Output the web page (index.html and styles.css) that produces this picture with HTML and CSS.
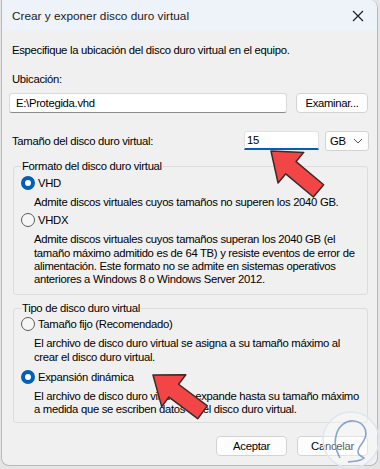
FILE: index.html
```html
<!DOCTYPE html>
<html lang="es">
<head>
  <meta charset="UTF-8">
  <title>Crear y exponer disco duro virtual</title>
  <link rel="stylesheet" href="styles.css">
</head>
<body>
  <div class="dialog">
    <div class="titlebar">
      <span class="title">Crear y exponer disco duro virtual</span>
      <svg class="close" width="12" height="12" viewBox="0 0 12 12"><path d="M1 1L11 11M11 1L1 11" stroke="#1a1a1a" stroke-width="1.1" fill="none"/></svg>
    </div>

    <div class="content">
      <p class="intro">Especifique la ubicación del disco duro virtual en el equipo.</p>
      <label class="lbl" for="loc">Ubicación:</label>
      <div class="row loc-row">
        <input class="textbox loc" id="loc" type="text" value="E:\Protegida.vhd" readonly>
        <button class="btn browse">Examinar...</button>
      </div>

      <div class="row size-row">
        <span>Tamaño del disco duro virtual:</span>
        <input class="textbox size" type="text" value="15" readonly>
        <div class="select">
          <span>GB</span>
          <svg width="10" height="6" viewBox="0 0 10 6"><path d="M1 1L5 5L9 1" stroke="#555" stroke-width="1" fill="none"/></svg>
        </div>
      </div>

      <fieldset class="group format">
        <legend>Formato del disco duro virtual</legend>
        <div class="radio checked"><span class="dot"></span>VHD</div>
        <p class="desc">Admite discos virtuales cuyos tamaños no superen los 2040 GB.</p>
        <div class="radio"><span class="dot"></span>VHDX</div>
        <p class="desc">Admite discos virtuales cuyos tamaños superan los 2040 GB (el<br>tamaño máximo admitido es de 64 TB) y resiste eventos de error de<br>alimentación. Este formato no se admite en sistemas operativos<br>anteriores a Windows 8 o Windows Server 2012.</p>
      </fieldset>

      <fieldset class="group type">
        <legend>Tipo de disco duro virtual</legend>
        <div class="radio"><span class="dot"></span>Tamaño fijo (Recomendado)</div>
        <p class="desc">El archivo de disco duro virtual se asigna a su tamaño máximo al<br>crear el disco duro virtual.</p>
        <div class="radio checked"><span class="dot"></span>Expansión dinámica</div>
        <p class="desc">El archivo de disco duro virtual se expande hasta su tamaño máximo<br>a medida que se escriben datos en el disco duro virtual.</p>
      </fieldset>

      <div class="actions">
        <button class="btn">Aceptar</button>
        <button class="btn">Cancelar</button>
      </div>
    </div>
  </div>

  <!-- annotation arrows and watermark drawn over the dialog -->
  <svg class="overlay" width="380" height="469" viewBox="0 0 380 469">
    <g class="mark">
      <circle cx="351" cy="440" r="28" fill="#ffffff" fill-opacity="0.35" stroke="#dfe6f0" stroke-width="1.5"/>
      <path d="M340 458 C336 450 334 444 336 436 C338 426 346 420 354 421 C363 422 368 430 365 438 C363 444 358 446 358 452 C358 456 362 456 364 458 C360 462 352 461 348 462" fill="none" stroke="#6d8fc7" stroke-width="1.6" stroke-opacity="0.8"/>
    </g>
    <polygon class="arrow" transform="translate(271 151) rotate(40)" points="0,0 26,-20 26,-8 62,-8 62,8 26,8 26,20"/>
    <polygon class="arrow" transform="translate(153 375) rotate(37)" points="0,0 26,-20 26,-8 62,-8 62,8 26,8 26,20"/>
  </svg>
</body>
</html>
```

FILE: styles.css
```css
body {
  margin: 0;
  width: 380px;
  height: 469px;
  background: #e4e4e4;
  font-family: "Liberation Sans", Arial, sans-serif;
  font-size: 11.3px;
  color: #000;
  position: relative;
  overflow: hidden;
}
.dialog {
  margin-left: 1px;
  width: 375px;
  height: 465px;
  background: #f0f0f0;
  border: 1px solid #b9b9b9;
  border-top: none;
  border-radius: 0 8px 8px 8px;
  overflow: hidden;
}
.titlebar {
  height: 31px;
  background: #eef3f9;
  display: flex;
  align-items: center;
  padding: 0 10px;
}
.title {
  flex: 1;
  font-size: 11.8px;
  color: #1a1a1a;
}
.close {
  margin-right: 3px;
}
.content {
  padding: 0 8px 0 10px;
  letter-spacing: -0.3px;
}
p {
  margin: 0;
}
.intro {
  line-height: 16px;
  margin-top: 11px;
}
.lbl {
  display: block;
  line-height: 16px;
  margin-top: 13px;
}
.row {
  display: flex;
  align-items: center;
}
.loc-row {
  margin-top: 6px;
  margin-left: -3px;
  margin-right: 1px;
}
.textbox {
  box-sizing: border-box;
  height: 20px;
  background: #fff;
  border: 1px solid #d9d9d9;
  border-bottom-color: #8a8a8a;
  border-radius: 3px;
  font: inherit;
  letter-spacing: inherit;
  color: #000;
  padding: 0 6px;
  outline: none;
}
.loc {
  width: 278px;
}
.btn {
  box-sizing: border-box;
  height: 20px;
  width: 72px;
  background: #fdfdfd;
  border: 1px solid #d3d3d3;
  border-radius: 4px;
  font: inherit;
  letter-spacing: inherit;
  color: #000;
  padding: 0;
}
.browse {
  margin-left: auto;
}
.size-row {
  margin-top: 18px;
  height: 20px;
}
.size-row span:first-child {
  flex: 1;
}
.size {
  width: 75px;
  height: 19px;
  border-color: #e2e2e2;
  border-bottom: 2px solid #005fb8;
  border-radius: 3px 3px 0 0;
  padding-left: 2px;
  margin-bottom: 1px;
}
.select {
  box-sizing: border-box;
  width: 44px;
  height: 20px;
  margin-left: 6px;
  background: #fdfdfd;
  border: 1px solid #d3d3d3;
  border-radius: 3px;
  display: flex;
  align-items: center;
  justify-content: space-between;
  padding: 0 5px 0 4px;
}
.group {
  margin: 7px 0 0 1px;
  width: 355px;
  box-sizing: border-box;
  border: 1px solid #dcdcdc;
  border-radius: 3px;
  padding: 0 0 8px 0;
}
.group legend {
  line-height: 16px;
  padding: 0 1px;
  margin-left: 7px;
}
.type {
  margin-top: 5px;
  padding-bottom: 5px;
}
.radio {
  display: flex;
  align-items: center;
  line-height: 16px;
  margin: 1px 0 0 7px;
}
.dot {
  box-sizing: border-box;
  width: 14px;
  height: 14px;
  border-radius: 50%;
  border: 1px solid #5c5c5c;
  background: #f6f6f6;
  margin-right: 3px;
}
.checked .dot {
  border: 4px solid #005fb8;
  background: #fff;
}
.desc {
  line-height: 13.3px;
  margin: 5px 0 3px 20px;
  white-space: nowrap;
}
.desc:last-child {
  margin-bottom: 0;
}
.type .radio {
  margin-top: 0;
}
.type .desc {
  margin-bottom: 5px;
}
.type .desc:last-child {
  margin-bottom: 0;
}
.actions {
  display: flex;
  justify-content: flex-end;
  gap: 10px;
  margin-top: 13px;
  margin-right: 1px;
}
.actions .btn {
  width: 71px;
}
.overlay {
  position: absolute;
  left: 0;
  top: 0;
  pointer-events: none;
}
.arrow {
  fill: #f24646;
  stroke: #3b2b2b;
  stroke-width: 1.5;
  stroke-linejoin: round;
}
```
